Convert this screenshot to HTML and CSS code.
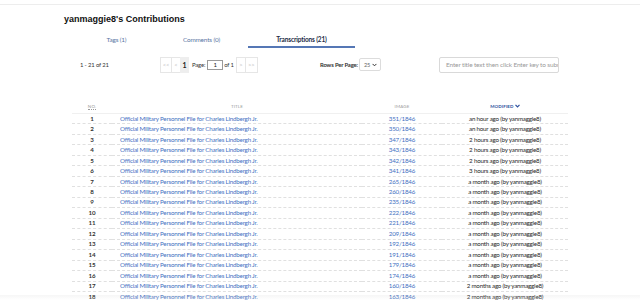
FILE: index.html
```html
<!DOCTYPE html>
<html>
<head>
<meta charset="utf-8">
<link rel="stylesheet" href="styles.css">
</head>
<body>
<div class="topbar"></div>
<main class="page">
  <h1 class="title">yanmaggie8's Contributions</h1>
  <nav class="tabs">
    <a class="tab">Tags (1)</a>
    <a class="tab">Comments (0)</a>
    <a class="tab active">Transcriptions (21)</a>
  </nav>
  <div class="toolbar">
    <div class="count">1 - 21 of 21</div>
    <div class="pager">
      <span class="pbtn w12">&lt;&lt;</span>
      <span class="pbtn w9">&lt;</span>
      <span class="pbtn cur">1</span>
      <span class="plabel">Page:</span>
      <span class="pinput">1</span>
      <span class="plabel">of 1</span>
      <span class="pbtn w9">&gt;</span>
      <span class="pbtn w13">&gt;&gt;</span>
    </div>
    <div class="rpp">
      <span class="rlabel">Rows Per Page:</span>
      <span class="select">25 <svg width="5" height="4" viewBox="0 0 6 4"><path d="M0.7 0.7 L3 3 L5.3 0.7" fill="none" stroke="#333" stroke-width="1.2"/></svg></span>
    </div>
    <div class="search">Enter title text then click Enter key to submit</div>
  </div>
  <table class="grid">
    <thead>
      <tr>
        <th class="c-no"><span class="sortable">NO.</span></th>
        <th class="c-title">TITLE</th>
        <th class="c-img">IMAGE</th>
        <th class="c-mod"><span class="sorted">MODIFIED <svg width="5" height="4" viewBox="0 0 6 4"><path d="M0.6 0.6 L3 3.2 L5.4 0.6" fill="none" stroke="#2c4f9e" stroke-width="1.4"/></svg></span></th>
      </tr>
    </thead>
    <tbody>
      <tr><td class="c-no">1</td><td class="c-title"><a>Official Military Personnel File for Charles Lindbergh Jr.</a></td><td class="c-img"><a>351/1846</a></td><td class="c-mod">an hour ago (by yanmaggie8)</td></tr>
      <tr><td class="c-no">2</td><td class="c-title"><a>Official Military Personnel File for Charles Lindbergh Jr.</a></td><td class="c-img"><a>350/1846</a></td><td class="c-mod">an hour ago (by yanmaggie8)</td></tr>
      <tr><td class="c-no">3</td><td class="c-title"><a>Official Military Personnel File for Charles Lindbergh Jr.</a></td><td class="c-img"><a>347/1846</a></td><td class="c-mod">2 hours ago (by yanmaggie8)</td></tr>
      <tr><td class="c-no">4</td><td class="c-title"><a>Official Military Personnel File for Charles Lindbergh Jr.</a></td><td class="c-img"><a>343/1846</a></td><td class="c-mod">2 hours ago (by yanmaggie8)</td></tr>
      <tr><td class="c-no">5</td><td class="c-title"><a>Official Military Personnel File for Charles Lindbergh Jr.</a></td><td class="c-img"><a>342/1846</a></td><td class="c-mod">2 hours ago (by yanmaggie8)</td></tr>
      <tr><td class="c-no">6</td><td class="c-title"><a>Official Military Personnel File for Charles Lindbergh Jr.</a></td><td class="c-img"><a>341/1846</a></td><td class="c-mod">3 hours ago (by yanmaggie8)</td></tr>
      <tr><td class="c-no">7</td><td class="c-title"><a>Official Military Personnel File for Charles Lindbergh Jr.</a></td><td class="c-img"><a>265/1846</a></td><td class="c-mod">a month ago (by yanmaggie8)</td></tr>
      <tr><td class="c-no">8</td><td class="c-title"><a>Official Military Personnel File for Charles Lindbergh Jr.</a></td><td class="c-img"><a>260/1846</a></td><td class="c-mod">a month ago (by yanmaggie8)</td></tr>
      <tr><td class="c-no">9</td><td class="c-title"><a>Official Military Personnel File for Charles Lindbergh Jr.</a></td><td class="c-img"><a>235/1846</a></td><td class="c-mod">a month ago (by yanmaggie8)</td></tr>
      <tr><td class="c-no">10</td><td class="c-title"><a>Official Military Personnel File for Charles Lindbergh Jr.</a></td><td class="c-img"><a>222/1846</a></td><td class="c-mod">a month ago (by yanmaggie8)</td></tr>
      <tr><td class="c-no">11</td><td class="c-title"><a>Official Military Personnel File for Charles Lindbergh Jr.</a></td><td class="c-img"><a>221/1846</a></td><td class="c-mod">a month ago (by yanmaggie8)</td></tr>
      <tr><td class="c-no">12</td><td class="c-title"><a>Official Military Personnel File for Charles Lindbergh Jr.</a></td><td class="c-img"><a>209/1846</a></td><td class="c-mod">a month ago (by yanmaggie8)</td></tr>
      <tr><td class="c-no">13</td><td class="c-title"><a>Official Military Personnel File for Charles Lindbergh Jr.</a></td><td class="c-img"><a>192/1846</a></td><td class="c-mod">a month ago (by yanmaggie8)</td></tr>
      <tr><td class="c-no">14</td><td class="c-title"><a>Official Military Personnel File for Charles Lindbergh Jr.</a></td><td class="c-img"><a>191/1846</a></td><td class="c-mod">a month ago (by yanmaggie8)</td></tr>
      <tr><td class="c-no">15</td><td class="c-title"><a>Official Military Personnel File for Charles Lindbergh Jr.</a></td><td class="c-img"><a>179/1846</a></td><td class="c-mod">a month ago (by yanmaggie8)</td></tr>
      <tr><td class="c-no">16</td><td class="c-title"><a>Official Military Personnel File for Charles Lindbergh Jr.</a></td><td class="c-img"><a>174/1846</a></td><td class="c-mod">a month ago (by yanmaggie8)</td></tr>
      <tr><td class="c-no">17</td><td class="c-title"><a>Official Military Personnel File for Charles Lindbergh Jr.</a></td><td class="c-img"><a>160/1846</a></td><td class="c-mod">2 months ago (by yanmaggie8)</td></tr>
      <tr><td class="c-no">18</td><td class="c-title"><a>Official Military Personnel File for Charles Lindbergh Jr.</a></td><td class="c-img"><a>163/1846</a></td><td class="c-mod">2 months ago (by yanmaggie8)</td></tr>
    </tbody>
  </table>
</main>
<div class="fold"></div>
</body>
</html>
```

FILE: styles.css
```css
html, body {
  margin: 0;
  padding: 0;
  background: #fff;
  overflow: hidden;
}
body {
  font-family: Lato, "Open Sans", sans-serif;
  color: #222;
  height: 300px;
  position: relative;
}
.topbar {
  height: 4px;
  border-bottom: 1px solid #ededed;
}
.page {
  padding-left: 64px;
  width: 510px;
}
.title {
  font-family: "Liberation Sans", Arial, sans-serif;
  font-weight: bold;
  font-size: 9px;
  margin: 8px 0 0 0;
  line-height: 12px;
  color: #111;
}
.tabs {
  display: flex;
  margin: 11px 0 0 14px;
}
.tab {
  font-size: 6.4px;
  letter-spacing: -0.15px;
  line-height: 8px;
  padding: 0 0 2px 0;
  color: #5a76a3;
  text-align: center;
  border-bottom: 2px solid transparent;
  white-space: nowrap;
}
.tab:nth-child(1) { width: 77px; }
.tab:nth-child(2) { width: 93px; }
.tab:nth-child(3) { width: 107px; }
.tab.active {
  color: #1c2b45;
  font-weight: bold;
  font-size: 6.5px;
  border-bottom-color: #5577b5;
}
.toolbar {
  display: flex;
  align-items: center;
  margin-top: 8px;
  height: 17px;
  font-size: 5.9px;
  letter-spacing: -0.15px;
  white-space: nowrap;
}
.count {
  margin-left: 16px;
  width: 80px;
  color: #333;
}
.pager {
  display: flex;
  align-items: center;
  width: 98px;
  height: 16px;
}
.pbtn {
  box-sizing: border-box;
  height: 16px;
  line-height: 14px;
  border: 1px solid #e6e6e6;
  text-align: center;
  color: #c4c4c4;
  margin-right: -1px;
}
.w12 { width: 12px; }
.w9 { width: 10px; }
.w13 { width: 13px; }
.pbtn.cur {
  width: 9px;
  background: #eeeeee;
  color: #222;
  font-size: 7px;
  font-weight: bold;
  border-color: #eeeeee;
  margin-right: 2px;
}
.plabel {
  color: #333;
  padding: 0 2px 0 1px;
}
.pinput {
  box-sizing: border-box;
  width: 16px;
  height: 10px;
  line-height: 8px;
  border: 1px solid #9a9a9a;
  text-align: center;
  font-size: 6px;
  color: #222;
}
.rpp {
  display: flex;
  align-items: center;
  margin-left: 62px;
}
.rlabel {
  width: 38px;
  color: #333;
  font-weight: bold;
}
.select {
  box-sizing: border-box;
  margin-left: 1px;
  width: 22px;
  height: 13px;
  border: 1px solid #dcdcdc;
  border-radius: 2px;
  display: flex;
  align-items: center;
  justify-content: space-between;
  padding: 0 3px 0 4px;
  color: #666;
  font-size: 5.6px;
}
.search {
  box-sizing: border-box;
  margin-left: 58px;
  width: 120px;
  height: 16px;
  line-height: 14px;
  border: 1px solid #d9d9d9;
  border-radius: 2px;
  padding: 0 6px;
  color: #9a9a9a;
  font-size: 6.5px;
  overflow: hidden;
}
.grid {
  margin: 27px 0 0 8px;
  width: 496px;
  border-collapse: collapse;
  table-layout: fixed;
  font-size: 6.2px;
  letter-spacing: -0.2px;
}
.grid th {
  font-size: 4.5px;
  font-weight: normal;
  color: #9c9c9c;
  letter-spacing: 0.1px;
  height: 13px;
  padding: 0;
  vertical-align: middle;
  border-bottom: 1px solid #f0f0f0;
}
.grid td {
  height: 9.47px;
  padding: 0;
  line-height: 8px;
  border-bottom: 1px dashed #e0e0e0;
  white-space: nowrap;
  color: #1e1e1e;
}
.c-no { width: 40px; text-align: center; }
.c-title { width: 250px; text-align: center; }
td.c-title { text-align: left; padding-left: 8px !important; }
.c-img { width: 80px; text-align: center; }
.c-mod { width: 126px; text-align: center; }
td.c-no { font-weight: bold; color: #333; }
.grid a { color: #3f70c2; }
.sortable {
  border-bottom: 1px dotted #999;
}
.sorted {
  color: #2c4f9e;
  font-weight: bold;
}
.sorted svg { vertical-align: 0.5px; }
.fold {
  position: absolute;
  left: 0;
  right: 0;
  bottom: 0;
  height: 5px;
  background: linear-gradient(to bottom, rgba(0,0,0,0.035), rgba(255,255,255,0.25));
}
```
